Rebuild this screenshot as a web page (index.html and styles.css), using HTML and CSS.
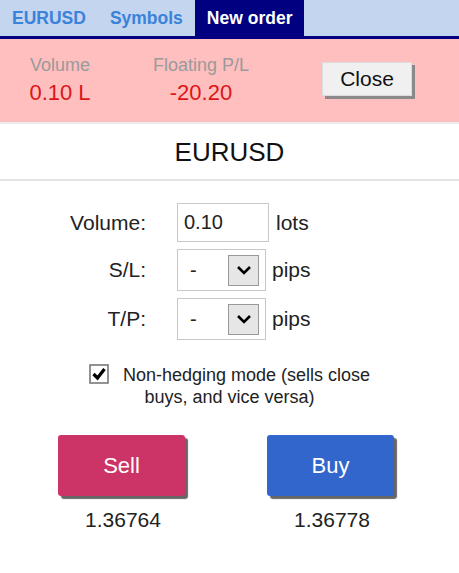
FILE: index.html
```html
<!DOCTYPE html>
<html lang="en">
<head>
    <meta charset="UTF-8">
    <meta name="viewport" content="width=device-width, initial-scale=1.0">
    <title>New order</title>
    <link rel="stylesheet" href="styles.css">
</head>
<body>
    <div class="tabs">
        <a class="tab" href="#">EURUSD</a>
        <a class="tab" href="#">Symbols</a>
        <a class="tab active" href="#">New order</a>
    </div>

    <div class="position">
        <div class="stat stat-volume">
            <div class="stat-label">Volume</div>
            <div class="stat-value">0.10 L</div>
        </div>
        <div class="stat stat-pl">
            <div class="stat-label">Floating P/L</div>
            <div class="stat-value">-20.20</div>
        </div>
        <button class="close-btn">Close</button>
    </div>

    <div class="symbol">EURUSD</div>

    <div class="order-form">
        <div class="row row-volume">
            <label class="row-label">Volume:</label>
            <input class="text-input" type="text" value="0.10">
            <span class="unit">lots</span>
        </div>
        <div class="row">
            <label class="row-label">S/L:</label>
            <div class="select">
                <span class="select-value">-</span>
                <span class="select-arrow">
                    <svg width="16" height="10" viewBox="0 0 16 10"><path d="M2 2 L8 8 L14 2" fill="none" stroke="#000" stroke-width="2.6"/></svg>
                </span>
            </div>
            <span class="unit">pips</span>
        </div>
        <div class="row">
            <label class="row-label">T/P:</label>
            <div class="select">
                <span class="select-value">-</span>
                <span class="select-arrow">
                    <svg width="16" height="10" viewBox="0 0 16 10"><path d="M2 2 L8 8 L14 2" fill="none" stroke="#000" stroke-width="2.6"/></svg>
                </span>
            </div>
            <span class="unit">pips</span>
        </div>
    </div>

    <p class="hedging">
        <svg class="checkbox" width="20" height="20" viewBox="0 0 20 20">
            <rect x="1" y="1" width="18" height="18" fill="#fff" stroke="#777" stroke-width="1.6"/>
            <path d="M4.5 10 L8.5 14 L15.5 5" fill="none" stroke="#000" stroke-width="3.2"/>
        </svg>
        Non-hedging mode (sells close buys, and vice versa)
    </p>

    <div class="trade">
        <div class="trade-col">
            <button class="trade-btn sell">Sell</button>
            <div class="price">1.36764</div>
        </div>
        <div class="trade-col">
            <button class="trade-btn buy">Buy</button>
            <div class="price">1.36778</div>
        </div>
    </div>
</body>
</html>
```

FILE: styles.css
```css
* {
    margin: 0;
    padding: 0;
    box-sizing: border-box;
    font-family: "Liberation Sans", Arial, sans-serif;
}

body {
    background-color: #fff;
    color: #222;
}

.tabs {
    display: flex;
    height: 39px;
    background: #c3d5ef;
    border-bottom: 3px solid #000080;
}

.tab {
    padding: 0 12px;
    line-height: 36px;
    font-size: 17.5px;
    font-weight: bold;
    color: #3b82d9;
    text-decoration: none;
}

.tab.active {
    background: #000080;
    color: #fff;
}

.position {
    display: flex;
    align-items: flex-start;
    height: 85px;
    padding-top: 16px;
    background: #ffbfbf;
    border-bottom: 2px solid #ebebeb;
}

.stat {
    text-align: center;
}

.stat-volume {
    width: 80px;
    margin-left: 20px;
}

.stat-pl {
    width: 100px;
    margin-left: 51px;
}

.stat-label {
    font-size: 18px;
    line-height: 20px;
    color: #9a9a9a;
}

.stat-value {
    font-size: 22px;
    line-height: 28px;
    margin-top: 4px;
    color: #dd1515;
}

.close-btn {
    margin-left: auto;
    margin-right: 47px;
    margin-top: 7px;
    width: 90px;
    height: 34px;
    background: #f0f0f0;
    border: 1px solid #dcdcdc;
    box-shadow: 3px 3px 0 #8a8a8a;
    font-size: 21px;
    color: #111;
}

.symbol {
    padding: 12px 0 11px;
    line-height: 32px;
    text-align: center;
    font-size: 26px;
    color: #111;
    border-bottom: 2px solid #e4e4e4;
}

.order-form {
    margin-top: 22px;
    display: flex;
    flex-direction: column;
    gap: 7px;
}

.row {
    display: flex;
    align-items: center;
    height: 42px;
    font-size: 21px;
}

.row-volume {
    height: 39px;
}

.row-label {
    width: 146px;
    text-align: right;
}

.text-input {
    margin-left: 31px;
    width: 92px;
    height: 39px;
    padding: 0 6px;
    border: 1px solid #c8c8c8;
    font-size: 20px;
    color: #222;
}

.select {
    margin-left: 31px;
    width: 89px;
    height: 42px;
    display: flex;
    align-items: center;
    justify-content: space-between;
    padding: 0 6px 0 12px;
    border: 1px solid #c8c8c8;
    font-size: 20px;
}

.select-arrow {
    display: flex;
    align-items: center;
    justify-content: center;
    width: 31px;
    height: 31px;
    background: #e6e6e6;
    border: 1px solid #999;
}

.unit {
    margin-left: 7px;
}

.select + .unit {
    margin-left: 6px;
}

.hedging {
    width: 300px;
    margin: 24px auto 0;
    text-align: center;
    font-size: 18px;
    line-height: 22px;
    color: #222;
}

.checkbox {
    vertical-align: -3px;
    margin-right: 9px;
}

.trade {
    display: flex;
    gap: 79px;
    padding-left: 58px;
    margin-top: 27px;
}

.trade-col {
    width: 130px;
    text-align: center;
}

.trade-btn {
    display: block;
    width: 127px;
    height: 61px;
    border: none;
    border-radius: 3px;
    box-shadow: 3px 3px 1px #666;
    font-size: 22px;
    color: #fff;
}

.trade-btn.sell {
    background: #cc3366;
}

.trade-btn.buy {
    background: #3366cc;
}

.price {
    margin-top: 12px;
    font-size: 21px;
    line-height: 24px;
    color: #222;
}
```
